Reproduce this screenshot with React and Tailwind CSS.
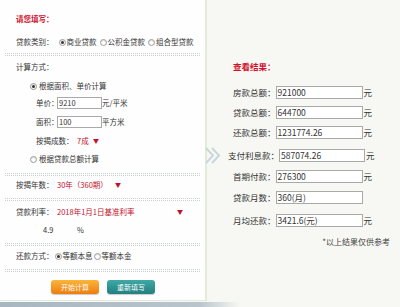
import React from 'react'

const font = { fontFamily: '"Noto Sans CJK SC", "Noto Sans", sans-serif' }

const Radio = ({ checked }) => (
    <span className="inline-flex w-[7px] h-[7px] rounded-full border border-[#9a9a9a] bg-white items-center justify-center shrink-0 shadow-[inset_0_1px_1px_rgba(0,0,0,0.15)]">
        {checked && <span className="w-[3px] h-[3px] rounded-full bg-[#333]" />}
    </span>
)

const Sep = ({ mt }) => (
    <div className={`${mt} mx-[5px] h-[3px] border-y border-dotted border-[#c9cfc9]`} />
)

const Caret = () => <span className="text-[#c0102a] text-[6px] leading-none">▼</span>

const ResultRow = ({ mt, label, value, unit = true, wide }) => (
    <div className={`${mt} h-[13px] flex items-center ${wide ? '-ml-[5px]' : ''}`}>
        <span className="text-[8.5px] text-[#333] whitespace-nowrap">{label}</span>
        <span className={`h-[13px] ${wide ? 'w-[86px]' : 'w-[87px]'} border border-[#a9a9a9] bg-white text-[8.5px] leading-[11px] text-[#333] pl-[1px]`}>
            {value}
        </span>
        {unit && <span className="text-[8.5px] text-[#333] ml-[1px]">元</span>}
    </div>
)

export default function App() {
    return (
        <div className="w-[400px] h-[307px] bg-[#f7f8f3] flex flex-col overflow-hidden relative" style={font}>
            <div className="flex h-[302px]">
                {/* left form */}
                <div className="w-[207px] h-[301px] bg-[#fefefe] border-r-2 border-b border-[#e4ead8] text-[7.5px] text-[#333] leading-none whitespace-nowrap">
                    <div className="pt-[10px] pl-[16px] h-[22px] flex items-end text-[#d0122d] font-bold">请您填写：</div>

                    <div className="mt-[13px] h-[14px] pl-[16px] flex items-center gap-[1px]">
                        <span className="mr-[4px]">贷款类别：</span>
                        <Radio checked />
                        <span className="mr-[2px]">商业贷款</span>
                        <Radio />
                        <span className="mr-[2px]">公积金贷款</span>
                        <Radio />
                        <span>组合型贷款</span>
                    </div>

                    <Sep mt="mt-[4px]" />

                    <div className="mt-[4px] h-[14px] pl-[16px] flex items-center">计算方式：</div>

                    <div className="mt-[5px] h-[14px] pl-[30px] flex items-center gap-[2px]">
                        <Radio checked />
                        <span>根据面积、单价计算</span>
                    </div>

                    <div className="mt-[3px] h-[14px] pl-[36px] flex items-center">
                        <span className="w-[21px] shrink-0">单价：</span>
                        <span className="w-[45px] h-[12px] border border-[#a9a9a9] bg-white text-[7.5px] leading-[10px] pl-[1px]">9210</span>
                        <span>元/平米</span>
                    </div>

                    <div className="mt-[5px] h-[14px] pl-[36px] flex items-center">
                        <span className="w-[21px] shrink-0">面积：</span>
                        <span className="w-[45px] h-[12px] border border-[#a9a9a9] bg-white text-[7.5px] leading-[10px] pl-[1px]">100</span>
                        <span>平方米</span>
                    </div>

                    <div className="mt-[5px] h-[14px] pl-[36px] flex items-center">
                        <span className="w-[41px]">按揭成数：</span>
                        <span className="text-[#c0102a] w-[16px]">7成</span>
                        <Caret />
                    </div>

                    <div className="mt-[4px] h-[14px] pl-[30px] flex items-center gap-[2px]">
                        <Radio />
                        <span>根据贷款总额计算</span>
                    </div>

                    <Sep mt="mt-[7px]" />

                    <div className="mt-[2px] h-[14px] pl-[16px] flex items-center">
                        <span className="w-[41px]">按揭年数：</span>
                        <span className="text-[#c0102a] w-[58px]">30年（360期）</span>
                        <Caret />
                    </div>

                    <Sep mt="mt-[6px]" />

                    <div className="mt-[4px] h-[14px] pl-[16px] flex items-center">
                        <span className="w-[41px]">贷款利率：</span>
                        <span className="text-[#c0102a] w-[120px]">2018年1月1日基准利率</span>
                        <Caret />
                    </div>

                    <div className="mt-[4px] h-[14px] pl-[43px] flex items-center">
                        <span className="w-[34px]">4.9</span>
                        <span>%</span>
                    </div>

                    <Sep mt="mt-[6px]" />

                    <div className="mt-[3px] h-[14px] pl-[16px] flex items-center gap-[1px]">
                        <span>还款方式：</span>
                        <Radio checked />
                        <span>等额本息</span>
                        <Radio />
                        <span>等额本金</span>
                    </div>

                    <Sep mt="mt-[6px]" />

                    <div className="mt-[8px] pl-[51px] flex gap-[8px]">
                        <button className="w-[48px] h-[14px] rounded-[3px] bg-gradient-to-b from-[#fbb53a] to-[#ec7d0c] text-white text-[7px] leading-none shadow-[0_1px_1px_rgba(0,0,0,0.2)]">开始计算</button>
                        <button className="w-[48px] h-[14px] rounded-[3px] bg-gradient-to-b from-[#3fa9a6] to-[#237f80] text-white text-[7px] leading-none shadow-[0_1px_1px_rgba(0,0,0,0.2)]">重新填写</button>
                    </div>
                </div>

                {/* right results */}
                <div className="flex-1 pl-[26px] text-[#333]">
                    <div className="mt-[60px] h-[12px] flex items-center text-[8.5px] text-[#d0122d] font-bold">查看结果：</div>
                    <ResultRow mt="mt-[14px]" label="房款总额：" value="921000" />
                    <ResultRow mt="mt-[7px]" label="贷款总额：" value="644700" />
                    <ResultRow mt="mt-[7px]" label="还款总额：" value="1231774.26" />
                    <ResultRow mt="mt-[10px]" label="支付利息款：" value="587074.26" wide />
                    <ResultRow mt="mt-[8px]" label="首期付款：" value="276300" />
                    <ResultRow mt="mt-[8px]" label="贷款月数：" value="360(月)" unit={false} />
                    <ResultRow mt="mt-[10px]" label="月均还款：" value="3421.6(元)" />
                    <div className="mt-[9px] h-[12px] pr-[10px] flex items-center justify-end text-[8px] text-[#444]">*以上结果仅供参考</div>
                </div>
            </div>

            {/* arrow between panels */}
            <svg className="absolute left-[204px] top-[147px]" width="18" height="17" viewBox="0 0 18 17" fill="none">
                <polyline points="2,1 9,8.5 2,16" stroke="#c9d6de" strokeWidth="2" />
                <polyline points="8,1 15,8.5 8,16" stroke="#c9d6de" strokeWidth="2" />
            </svg>

            <div className="h-[5px] w-full bg-gradient-to-r from-[#a7b6c1] via-[#b9c5cd] via-50% to-transparent to-60%" />
        </div>
    )
}
